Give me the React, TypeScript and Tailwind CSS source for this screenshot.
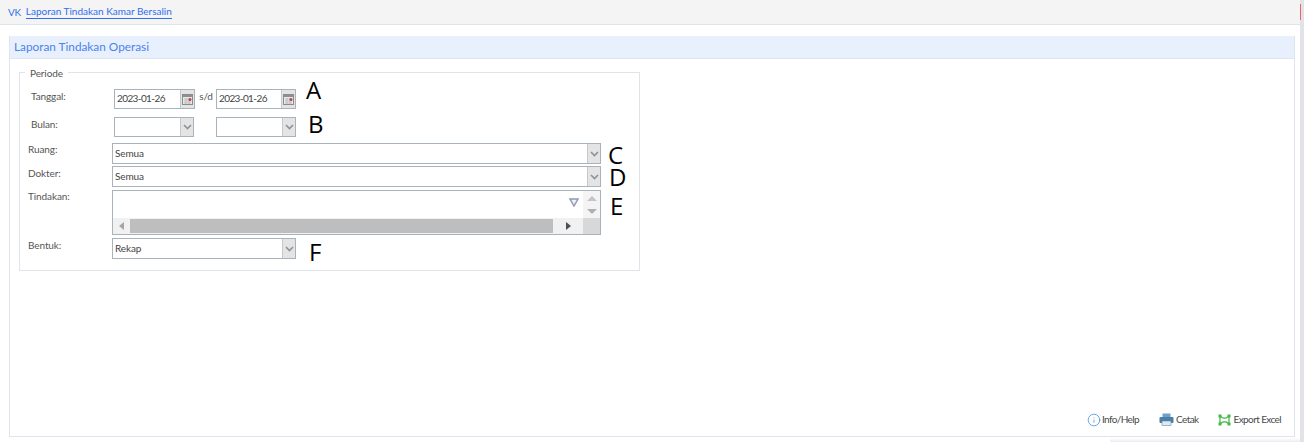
import React from "react";
import { Info } from "lucide-react";

const Chevron = () => (
  <svg width="9" height="6" viewBox="0 0 9 6">
    <path d="M1 1l3.5 3.5L8 1" fill="none" stroke="#8d9297" strokeWidth="1.6" />
  </svg>
);

const Calendar = () => (
  <svg width="11" height="11" viewBox="0 0 11 11">
    <rect x="0.5" y="0.5" width="10" height="10" fill="#e9e9e9" stroke="#8b8b8b" />
    <rect x="1" y="1" width="9" height="2" fill="#8b8f96" />
    <path d="M2 5h7M2 7h7M2 9h7M4 4v6M7 4v6" stroke="#b5b5b5" strokeWidth="0.7" />
    <circle cx="8" cy="5.5" r="1.5" fill="#c0404f" />
  </svg>
);

const DateField = ({ value, className }: { value: string; className: string }) => (
  <div className={`flex h-5 border border-[#a9b3bb] bg-white ${className}`}>
    <div className="flex-1 pl-[2px] text-[10px] leading-[17px] tracking-[-0.6px] text-[#444]">{value}</div>
    <div className="flex w-[14px] items-center justify-center border-l border-[#c4c9ce] bg-[#e4e4e4]">
      <Calendar />
    </div>
  </div>
);

const Combo = ({ value, className }: { value?: string; className: string }) => (
  <div className={`flex border border-[#a9b3bb] bg-white ${className}`}>
    <div className="flex-1 pl-[2px] text-[10px] leading-[18px] tracking-[-0.1px] text-[#444]">{value}</div>
    <div className="flex w-[13px] items-center justify-center border-l border-[#c4c9ce] bg-[#e4e4e4]">
      <Chevron />
    </div>
  </div>
);

const Mark = ({ children, className }: { children: string; className: string }) => (
  <span className={`font-['Open_Sans'] text-[24px] leading-[20px] text-black ${className}`}>{children}</span>
);

const Label = ({ children, className }: { children: string; className: string }) => (
  <div className={`text-[10px] leading-[13px] tracking-[-0.1px] text-[#555] ${className}`}>{children}</div>
);

export default function App() {
  return (
    <div className="relative flex h-[442px] w-[1304px] flex-col overflow-hidden bg-white font-['Lato'] pr-[4px]">
      <div className="flex h-[25px] shrink-0 items-center border-b border-[#dfe3ec] bg-[#f4f4f4] pl-[8px] text-[10px] text-[#2f6fed]">
        <span className="mr-[5px] tracking-[-0.3px]">VK</span>
        <span className="border-b border-[#2f6fed] leading-[13px]">Laporan Tindakan Kamar Bersalin</span>
      </div>

      <div className="mt-[11px] ml-[9px] mr-[5px] flex h-[401px] flex-col border border-t-0 border-[#dfe5ee]">
        <div className="flex h-[23px] shrink-0 items-center border-b border-[#dfe5ee] bg-[#e8f0fd] pl-[4px] text-[11.8px] text-[#4b83ee]">
          Laporan Tindakan Operasi
        </div>

        <div className="relative mt-[13px] ml-[9px] flex h-[199px] w-[621px] flex-col border border-[#dfe3ea] pl-[92px]">
          <div className="absolute left-[5px] top-[-6px] bg-white px-[5px] text-[10px] leading-[12px] tracking-[-0.1px] text-[#555]">Periode</div>

          <div className="ml-[2px] mt-[16px] flex h-5 items-start">
            <Label className="absolute left-[11px] top-[17px]">Tanggal:</Label>
            <DateField value="2023-01-26" className="w-[81px]" />
            <span className="mt-[1px] w-[21px] pl-[1px] text-center text-[10px] leading-[12px] tracking-[-0.2px] text-[#555]">s/d</span>
            <DateField value="2023-01-26" className="w-[80px]" />
            <Mark className="ml-[10px] mt-[-9px]">A</Mark>
          </div>

          <div className="ml-[2px] mt-[8px] flex h-5 items-start">
            <Label className="absolute left-[11px] top-[45px]">Bulan:</Label>
            <Combo className="h-5 w-[80px]" />
            <div className="w-[22px]" />
            <Combo className="h-5 w-[80px]" />
            <Mark className="ml-[12px] mt-[-3px]">B</Mark>
          </div>

          <div className="mt-[6px] flex h-[21px] items-start">
            <Label className="absolute left-[8px] top-[70px]">Ruang:</Label>
            <Combo value="Semua" className="h-[21px] w-[489px]" />
            <Mark className="ml-[7px] mt-[2px]">C</Mark>
          </div>

          <div className="mt-[2px] flex h-[21px] items-start">
            <Label className="absolute left-[8px] top-[94px]">Dokter:</Label>
            <Combo value="Semua" className="h-[21px] w-[489px]" />
            <Mark className="ml-[8px] mt-[1px]">D</Mark>
          </div>

          <div className="mt-[3px] flex h-[45px] items-start">
            <Label className="absolute left-[8px] top-[117px]">Tindakan:</Label>
            <div className="flex h-[45px] w-[489px] flex-col border border-[#a9b3bb] bg-white">
              <div className="flex h-[27px] shrink-0">
                <div className="flex flex-1 items-center justify-end pb-[5px] pr-[4px]">
                  <svg width="10" height="9" viewBox="0 0 10 9">
                    <path d="M1 1h8L5 8z" fill="#eef0f4" stroke="#8b9ab0" strokeWidth="1.4" />
                  </svg>
                </div>
                <div className="flex w-[17px] flex-col items-center justify-center gap-[8px] bg-[#f4f4f4]">
                  <div className="h-0 w-0 border-x-[5px] border-b-[5px] border-x-transparent border-b-[#c4c4c4]" />
                  <div className="h-0 w-0 border-x-[5px] border-t-[5px] border-x-transparent border-t-[#b0b0b0]" />
                </div>
              </div>
              <div className="flex flex-1 items-stretch bg-[#f1f1f1]">
                <div className="flex w-[17px] items-center justify-center">
                  <div className="h-0 w-0 border-y-[4px] border-r-[5px] border-y-transparent border-r-[#a5a5a5]" />
                </div>
                <div className="my-[1px] w-[423px] bg-[#bebebe]" />
                <div className="flex flex-1 items-center justify-center">
                  <div className="h-0 w-0 border-y-[4px] border-l-[5px] border-y-transparent border-l-[#505050]" />
                </div>
                <div className="w-[17px] bg-[#d8d8d8]" />
              </div>
            </div>
            <Mark className="ml-[9px] mt-[6px]">E</Mark>
          </div>

          <div className="mt-[3px] flex h-[21px] items-start">
            <Label className="absolute left-[8px] top-[166px]">Bentuk:</Label>
            <Combo value="Rekap" className="h-[21px] w-[184px]" />
            <Mark className="ml-[13px] mt-[4px]">F</Mark>
          </div>
        </div>

        <div className="mt-auto mb-[9px] mr-[13px] flex items-center justify-end text-[10px] tracking-[-0.6px] text-[#4a4a4a]">
          <Info size={14} strokeWidth={1.3} className="mr-[1px] text-[#3f8de0]" />
          <span>Info/Help</span>
          <svg className="ml-[20px] mr-[2px]" width="15" height="13" viewBox="0 0 15 13">
            <rect x="3.5" y="0.5" width="8" height="4" fill="#6fa0c8" />
            <rect x="0.5" y="4" width="14" height="6" rx="1" fill="#4a7fa8" />
            <rect x="3" y="8" width="9" height="4.5" fill="#dfe9f1" stroke="#5f8db0" strokeWidth="0.6" />
          </svg>
          <span>Cetak</span>
          <svg className="ml-[19px] mr-[3px]" width="13" height="12" viewBox="0 0 13 12">
            <path d="M2 2c3 3 6 3 9 0M2 10c3-3 6-3 9 0M2 2v8M11 2v8" fill="none" stroke="#58c35a" strokeWidth="1.4" />
            <rect x="0.5" y="0.5" width="3" height="3" fill="#45b84a" />
            <rect x="9.5" y="0.5" width="3" height="3" fill="#45b84a" />
            <rect x="0.5" y="8.5" width="3" height="3" fill="#45b84a" />
            <rect x="9.5" y="8.5" width="3" height="3" fill="#45b84a" />
          </svg>
          <span>Export Excel</span>
        </div>
      </div>

      <div className="absolute bottom-0 right-0 h-[4px] w-[194px] bg-gradient-to-t from-[#ececec] to-transparent" />
      <div className="absolute right-0 top-0 h-full w-[4px] bg-[#e2e3e8]">
        <div className="mt-[4px] h-[16px] w-[1px] bg-[#f06060]" />
      </div>
    </div>
  );
}
